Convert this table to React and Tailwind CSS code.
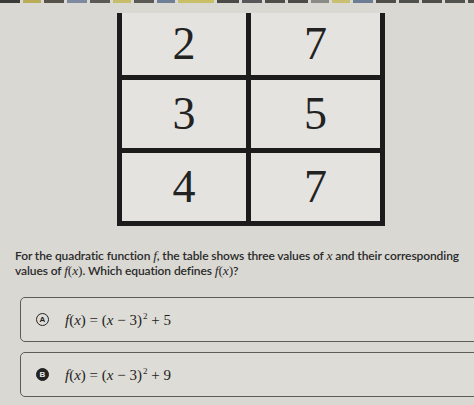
import React from "react";

const dashes = [
  ["#3a3a38", 20], ["#b9ad5a", 18], ["#55524c", 20], ["#7d8aa0", 20], ["#5c5a56", 20], ["#c8be6a", 18],
  ["#5a5955", 20], ["#6f8096", 18], ["#c9bf66", 36], ["#4b4a47", 22], ["#57565a", 20], ["#4f4e4b", 20],
  ["#4c4b48", 20], ["#8a8a86", 18], ["#c8bf70", 18], ["#6d7d96", 20], ["#4f4e4b", 20], ["#50504c", 20],
  ["#4e4d4a", 20], ["#52524e", 20], ["#50504c", 20], ["#52524e", 20], ["#50504c", 20],
];

function Formula({ c }) {
  return (
    <span className="font-['Liberation_Serif',serif] text-[15px] text-[#1e1e1e] whitespace-nowrap">
      <i>f</i>(<i>x</i>) = (<i>x</i> − 3)<sup className="text-[9px] relative -top-[6px] ml-[1px]">2</sup> + {c}
    </span>
  );
}

function Option({ letter, c, filled }) {
  return (
    <div className="ml-[20px] w-[470px] h-[45px] border border-[#5d5c58] rounded-l-[5px] bg-[#dddcd7] flex items-center">
      <div
        className={
          "ml-[15px] w-[13px] h-[13px] rounded-full border-[1.5px] border-[#222] flex items-center justify-center text-[8px] font-bold font-['Liberation_Sans',sans-serif] leading-none " +
          (filled ? "bg-[#222] text-[#e8e8e4]" : "text-[#222]")
        }
      >
        {letter}
      </div>
      <div className="ml-[16px]">
        <Formula c={c} />
      </div>
    </div>
  );
}

const M = "font-['Liberation_Serif',serif] font-normal text-[13.5px]";

export default function App() {
  return (
    <div className="w-[474px] h-[405px] bg-[#d9d8d3] overflow-hidden">
      <div className="flex h-[3px] gap-[3px]">
        {dashes.map(([col, w], i) => (
          <div key={i} style={{ background: col, width: w }} className="h-full shrink-0" />
        ))}
      </div>
      <div className="ml-[117px] mt-[10px] w-[268px] border-l-[5px] border-r-[5px] border-b-[5px] border-[#1c1c1c] font-['Liberation_Serif',serif] text-[46px] text-[#222] leading-none">
        <div className="grid grid-cols-[124px_5px_129px] bg-[#e4e3df]">
          <div className="h-[62px] flex items-center justify-center">2</div>
          <div className="bg-[#1c1c1c]" />
          <div className="h-[62px] flex items-center justify-center">7</div>
        </div>
        <div className="h-[5px] bg-[#1c1c1c]" />
        <div className="grid grid-cols-[124px_5px_129px] bg-[#e4e3df]">
          <div className="h-[68px] flex items-center justify-center">3</div>
          <div className="bg-[#1c1c1c]" />
          <div className="h-[68px] flex items-center justify-center">5</div>
        </div>
        <div className="h-[5px] bg-[#1c1c1c]" />
        <div className="grid grid-cols-[124px_5px_129px] bg-[#e4e3df]">
          <div className="h-[68px] flex items-center justify-center">4</div>
          <div className="bg-[#1c1c1c]" />
          <div className="h-[68px] flex items-center justify-center">7</div>
        </div>
      </div>
      <div className="ml-[15px] mt-[22px] text-[12px] tracking-[-0.1px] leading-[15px] text-[#2a2a2a] font-['Lato',sans-serif] font-semibold whitespace-nowrap">
        <div>
          For the quadratic function <i className={M}>f</i>, the table shows three values of{" "}
          <i className={M}>x</i> and their corresponding
        </div>
        <div>
          values of <span className={M}><i>f</i>(<i>x</i>)</span>. Which equation defines{" "}
          <span className={M}><i>f</i>(<i>x</i>)</span>?
        </div>
      </div>
      <div className="mt-[19px]">
        <Option letter="A" c="5" />
      </div>
      <div className="mt-[10px]">
        <Option letter="B" c="9" filled />
      </div>
    </div>
  );
}
